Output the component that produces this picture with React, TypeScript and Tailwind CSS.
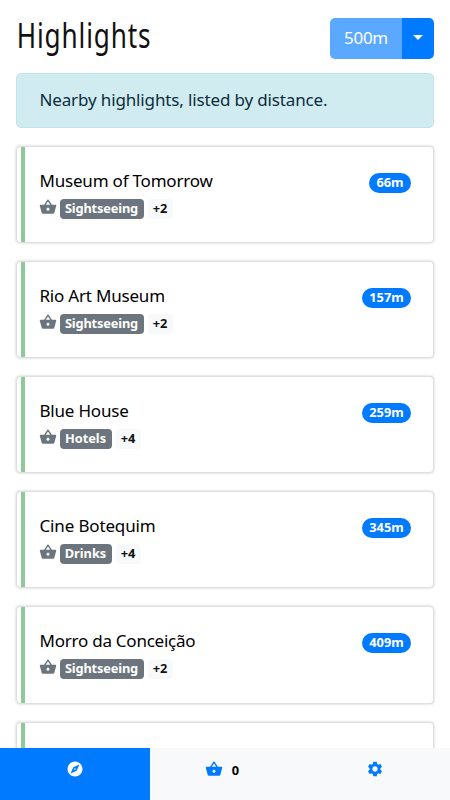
import React from 'react';
import { MdExplore, MdSettings, MdShoppingBasket } from 'react-icons/md';

interface Highlight {
  name: string;
  tag: string;
  more: number;
  distance: string;
  nameClass: string;
  tagClass: string;
  distanceClass: string;
}

const highlights: Highlight[] = [
  { name: 'Museum of Tomorrow', tag: 'Sightseeing', more: 2, distance: '66m', nameClass: 'tracking-[-0.2px]', tagClass: 'w-[84px] tracking-[-0.15px]', distanceClass: 'w-[42px]' },
  { name: 'Rio Art Museum', tag: 'Sightseeing', more: 2, distance: '157m', nameClass: 'tracking-[-0.2px]', tagClass: 'w-[84px] tracking-[-0.15px]', distanceClass: 'w-[49px]' },
  { name: 'Blue House', tag: 'Hotels', more: 4, distance: '259m', nameClass: 'tracking-[-0.2px]', tagClass: 'w-[52px]', distanceClass: 'w-[49px]' },
  { name: 'Cine Botequim', tag: 'Drinks', more: 4, distance: '345m', nameClass: 'tracking-[-0.15px]', tagClass: 'w-[52px]', distanceClass: 'w-[49px]' },
  { name: 'Morro da Conceição', tag: 'Sightseeing', more: 2, distance: '409m', nameClass: 'tracking-[-0.24px]', tagClass: 'w-[84px] tracking-[-0.15px]', distanceClass: 'w-[49px]' },
];

const cardClass =
  'h-[97.2px] mb-[18px] shrink-0 rounded-[4px] bg-white border border-[#dfdfdf] shadow-[0_0_3px_rgba(0,0,0,0.2)] pl-[4px]';

const HighlightCard: React.FC<{ item: Highlight }> = ({ item }) => (
  <div className={cardClass}>
    <div className="h-full border-l-4 border-[#8fc99b] pl-[14.5px] pr-[22px] pt-[21px] flex justify-between items-start">
      <div>
        <h2 className={`h-[27px] leading-[25px] text-[17px] font-[370] text-black whitespace-nowrap ${item.nameClass}`}>{item.name}</h2>
        <div className="flex items-center h-[20px] mt-[4px] text-[12.8px] font-bold">
          <MdShoppingBasket className="w-[18px] h-[18px] -ml-[0.5px] -mt-[4px] text-[#6c757d]" />
          <span className={`ml-[2.5px] h-[20px] leading-[19px] rounded-[4px] bg-[#6c757d] text-white text-center ${item.tagClass}`}>{item.tag}</span>
          <span className="ml-[4px] w-[25px] h-[20px] leading-[19px] rounded-[4px] bg-[#f8f9fa] text-[#111] text-center">+{item.more}</span>
        </div>
      </div>
      <span className={`mt-[5px] h-[20px] leading-[19px] rounded-full bg-[#007bff] text-white text-[12.8px] font-bold text-center ${item.distanceClass}`}>
        {item.distance}
      </span>
    </div>
  </div>
);

const App: React.FC = () => {
  return (
    <div className="flex flex-col h-screen overflow-hidden bg-white font-['Noto_Sans',sans-serif]">
      <main className="flex-1 min-h-0 overflow-hidden flex flex-col px-[16px]">
        {/* Header */}
        <header className="h-[73px] shrink-0 pt-[18px] flex justify-between items-start">
          <h1 className="pl-px text-[34px] leading-[34px] text-[#111] tracking-[1.1px] origin-left scale-x-[0.77] whitespace-nowrap">Highlights</h1>
          <div className="flex h-[41px] w-[104px] rounded-[5px] overflow-hidden text-white">
            <button className="w-[72px] pb-px bg-[#5aa8ff] text-[17px] font-[370] tracking-[-0.3px]">500m</button>
            <button className="w-[32px] bg-[#007bff] flex items-center justify-center">
              <span className="w-0 h-0 border-x-[5px] border-x-transparent border-t-[5.5px] border-t-white -mt-[2px]" />
            </button>
          </div>
        </header>

        <div className="h-[55px] mb-[17.6px] shrink-0 rounded-[5px] border border-[#bee5eb] bg-[#d1ecf1] pl-[22.5px] text-[17px] leading-[52px] font-[370] tracking-[-0.14px] text-[#0c2c3c] whitespace-nowrap">
          <span>Nearby highlights, listed by distance.</span>
        </div>

        {highlights.map(item => <HighlightCard key={item.name} item={item} />)}

        <div className={cardClass}>
          <div className="h-full border-l-4 border-[#8fc99b]" />
        </div>
      </main>

      {/* Bottom navigation */}
      <nav className="h-[52px] shrink-0 grid grid-cols-3 bg-[#f8f9fa] text-[#007bff]">
        <a className="bg-[#007bff] text-white flex justify-center pt-[12px]">
          <MdExplore className="w-[18px] h-[18px]" />
        </a>
        <a className="flex justify-center pt-[12px] pr-[6px]">
          <MdShoppingBasket className="w-[18px] h-[18px]" />
          <span className="ml-[9px] leading-[20px] text-[12.8px] font-bold text-black">0</span>
        </a>
        <a className="flex justify-center pt-[12px]">
          <MdSettings className="w-[18px] h-[18px]" />
        </a>
      </nav>
    </div>
  );
};

export default App;
